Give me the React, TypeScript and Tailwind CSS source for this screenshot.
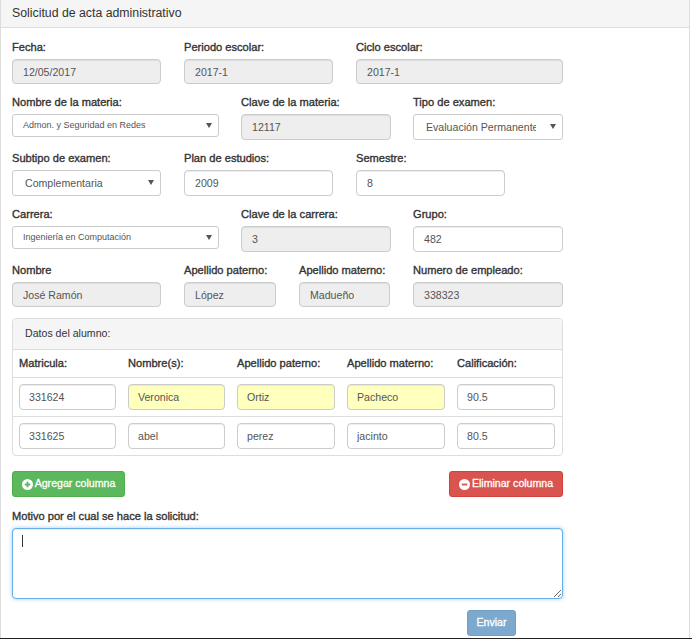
const boldText = "text-[11.1px] font-normal text-[#333] [-webkit-text-stroke:0.35px_#333]";
const labelCls = `block h-[13px] leading-[13px] mb-[5px] whitespace-nowrap ${boldText}`;
const inputBase =
  "block w-full rounded-[4px] border border-[#ccc] text-[10.6px] text-[#555] outline-none shadow-[inset_0_1px_1px_rgba(0,0,0,0.075)]";

const Field = ({
  label,
  value,
  width,
  disabled,
  tall,
}: {
  label: string;
  value: string;
  width: string;
  disabled?: boolean;
  tall?: boolean;
}) => {
  return (
    <div className={width}>
      <label className={labelCls}>{label}</label>
      <input
        readOnly
        value={value}
        className={`${inputBase} px-[10px] ${tall ? "h-[26px]" : "h-[25px]"} ${disabled ? "bg-[#eee]" : "bg-white"}`}
      />
    </div>
  );
};

const SelectField = ({
  label,
  value,
  width,
  small,
}: {
  label: string;
  value: string;
  width: string;
  small?: boolean;
}) => {
  return (
    <div className={width}>
      <label className={labelCls}>{label}</label>
      <div
        className={`relative flex items-center overflow-hidden rounded-[3px] border border-[#ccc] bg-white text-[#555] ${
          small ? "h-[23px] pl-[10px] text-[9px]" : "h-[26px] pl-[12px] pt-px text-[10.6px]"
        }`}
      >
        <span className={small ? "whitespace-nowrap" : "max-w-[110px] overflow-hidden whitespace-nowrap"}>{value}</span>
        <svg className="absolute right-[6px] top-1/2 -mt-[3px]" width="6" height="5" viewBox="0 0 6 5">
          <path d="M0 0H6L3 5Z" fill="#555" />
        </svg>
      </div>
    </div>
  );
};

const Cell = ({ value, width, yellow }: { value: string; width: string; yellow?: boolean }) => {
  return (
    <div className={width}>
      <input
        readOnly
        value={value}
        className={`${inputBase} h-[26px] px-[9px] ${yellow ? "bg-[#ffffbe] text-[#333]" : "bg-white"}`}
      />
    </div>
  );
};

const columns = ["w-[97px]", "w-[97px]", "w-[98px]", "w-[98px]", "w-[98px]"];

const alumnos = [
  { values: ["331624", "Veronica", "Ortiz", "Pacheco", "90.5"], yellow: true },
  { values: ["331625", "abel", "perez", "jacinto", "80.5"], yellow: false },
];

export default function App() {
  return (
    <div className="h-[639px] w-[692px] overflow-hidden bg-white font-['Liberation_Sans',Arial,sans-serif]">
      <div className="h-[638px] w-[690px] border-x border-[#ddd]">
        <div className="flex h-[28px] items-center border-b border-[#ddd] bg-[#f5f5f5] px-[11px] text-[12.3px] text-[#333]">
          Solicitud de acta administrativo
        </div>

        <div className="w-[562px] pl-[11px] pt-[13px]">
          <div className="flex gap-[23px]">
            <Field label="Fecha:" value="12/05/2017" width="w-[149px]" disabled />
            <Field label="Periodo escolar:" value="2017-1" width="w-[149px]" disabled />
            <Field label="Ciclo escolar:" value="2017-1" width="w-[207px]" disabled />
          </div>

          <div className="mt-[12px] flex gap-[22px]">
            <SelectField label="Nombre de la materia:" value="Admon. y Seguridad en Redes" width="w-[207px]" small />
            <Field label="Clave de la materia:" value="12117" width="w-[150px]" disabled tall />
            <SelectField label="Tipo de examen:" value="Evaluación Permanente" width="w-[150px]" />
          </div>

          <div className="mt-[12px] flex gap-[23px]">
            <SelectField label="Subtipo de examen:" value="Complementaria" width="w-[149px]" />
            <Field label="Plan de estudios:" value="2009" width="w-[149px]" tall />
            <Field label="Semestre:" value="8" width="w-[149px]" tall />
          </div>

          <div className="mt-[12px] flex gap-[22px]">
            <SelectField label="Carrera:" value="Ingeniería en Computación" width="w-[207px]" small />
            <Field label="Clave de la carrera:" value="3" width="w-[150px]" disabled tall />
            <Field label="Grupo:" value="482" width="w-[150px]" tall />
          </div>

          <div className="mt-[12px] flex gap-[23px]">
            <Field label="Nombre" value="José Ramón" width="w-[149px]" disabled />
            <Field label="Apellido paterno:" value="López" width="w-[92px]" disabled />
            <Field label="Apellido materno:" value="Madueño" width="w-[91px]" disabled />
            <Field label="Numero de empleado:" value="338323" width="w-[150px]" disabled />
          </div>

          <div className="mt-[11px] w-[551px] overflow-hidden rounded-[4px] border border-[#ddd]">
            <div className="flex h-[31px] items-center border-b border-[#ddd] bg-[#f5f5f5] px-[12px] text-[10.6px] text-[#333]">
              Datos del alumno:
            </div>
            <div className={`flex h-[27px] items-center gap-[12px] pl-[6px] whitespace-nowrap ${boldText}`}>
              <span className={columns[0]}>Matricula:</span>
              <span className={columns[1]}>Nombre(s):</span>
              <span className={columns[2]}>Apellido paterno:</span>
              <span className={columns[3]}>Apellido materno:</span>
              <span className={columns[4]}>Calificación:</span>
            </div>
            {alumnos.map((alumno) => (
              <div key={alumno.values[0]} className="flex h-[39px] items-center gap-[12px] border-t border-[#ddd] pl-[6px]">
                {alumno.values.map((value, i) => (
                  <Cell key={i} value={value} width={columns[i]} yellow={alumno.yellow && i > 0 && i < 4} />
                ))}
              </div>
            ))}
          </div>

          <div className="mt-[15px] flex w-[551px] justify-between">
            <button className="flex h-[26px] w-[113px] items-center justify-center gap-[2px] rounded-[3px] border border-[#4cae4c] bg-[#5cb85c] text-[10.6px] text-white [-webkit-text-stroke:0.3px_#fff]">
              <svg width="11" height="11" viewBox="0 0 12 12">
                <circle cx="6" cy="6" r="6" fill="#fff" />
                <path d="M3 6H9M6 3V9" stroke="#5cb85c" strokeWidth="2" />
              </svg>
              Agregar columna
            </button>
            <button className="flex h-[26px] w-[114px] items-center justify-center gap-[2px] rounded-[3px] border border-[#d43f3a] bg-[#d9534f] text-[10.6px] text-white [-webkit-text-stroke:0.3px_#fff]">
              <svg width="11" height="11" viewBox="0 0 12 12">
                <circle cx="6" cy="6" r="6" fill="#fff" />
                <path d="M3 6H9" stroke="#d9534f" strokeWidth="2" />
              </svg>
              Eliminar columna
            </button>
          </div>

          <label className={`${labelCls} mt-[13px]`}>Motivo por el cual se hace la solicitud:</label>
          <div className="relative w-[551px]">
            <textarea
              readOnly
              className="block h-[71px] w-full rounded-[4px] border border-[#66afe9] bg-white outline-none shadow-[inset_0_1px_1px_rgba(0,0,0,0.075),0_0_4px_rgba(102,175,233,0.6)]"
            />
            <div className="absolute left-[10px] top-[7px] h-[12px] w-px bg-[#333]" />
          </div>

          <div className="mt-[11px] flex w-[504px] justify-end">
            <button className="h-[26px] w-[49px] rounded-[3px] border border-[#6f9fc7] bg-[#7ea9cf] text-[10.6px] text-white [-webkit-text-stroke:0.3px_#fff]">
              Enviar
            </button>
          </div>
        </div>
      </div>
      <div className="h-px w-full bg-[#222]" />
    </div>
  );
}
